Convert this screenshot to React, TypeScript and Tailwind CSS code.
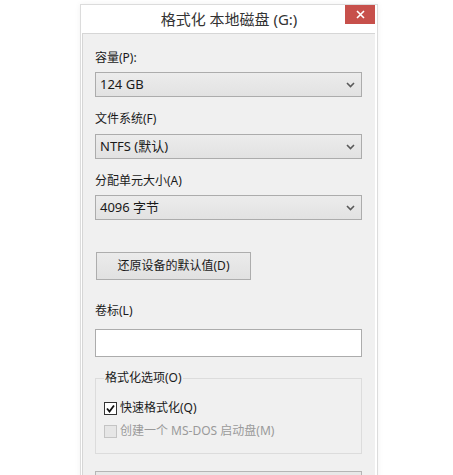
import React from 'react';

const Chevron = () => (
  <svg width="9" height="6" viewBox="0 0 9 6" className="shrink-0">
    <path d="M1 1 L4.5 4.5 L8 1" fill="none" stroke="#5a5a5a" strokeWidth="1.6" />
  </svg>
);

const Select = ({ value, className = '' }: { value: string; className?: string }) => (
  <div
    className={`flex h-[25px] w-[267px] items-center justify-between border border-[#acacac] bg-gradient-to-b from-[#ececec] to-[#e2e2e2] pl-[4px] pr-[6px] text-[13px] text-[#1a1a1a] ${className}`}
  >
    <span>{value}</span>
    <Chevron />
  </div>
);

const Label = ({ text, className = '' }: { text: string; className?: string }) => (
  <div className={`h-[18px] text-[12px] leading-[18px] text-[#1a1a1a] ${className}`}>{text}</div>
);

export default function App() {
  return (
    <div
      className="h-[475px] w-[453px] overflow-hidden bg-white"
      style={{ fontFamily: '"Noto Sans", "Noto Sans CJK SC", sans-serif' }}
    >
      <div className="relative ml-[80px] pt-[4px]">
        <div className="w-[298px] border border-[#dcdcdc] bg-white shadow-[0_0_6px_rgba(0,0,0,0.06)]">
          {/* title bar */}
          <div className="flex h-[28px] items-center justify-center text-[15px] text-[#333]">
            格式化 本地磁盘 (G:)
          </div>
          <div className="absolute left-[265px] top-[5px] flex h-[19px] w-[30px] items-center justify-center bg-[#c7504b]">
            <svg width="9" height="9" viewBox="0 0 9 9">
              <path d="M1 1 L8 8 M8 1 L1 8" stroke="#fff" strokeWidth="1.6" />
            </svg>
          </div>

          {/* client */}
          <div className="ml-[1px] mr-[2px] border-l border-t border-[#d6d6d6] bg-[#f0f0f0] pb-[10px] pl-[12px] pt-[15px]">
            <Label text="容量(P):" />
            <Select value="124 GB" className="mt-[5px]" />

            <Label text="文件系统(F)" className="mt-[13px]" />
            <Select value="NTFS (默认)" className="mt-[6px]" />

            <Label text="分配单元大小(A)" className="mt-[13px]" />
            <Select value="4096 字节" className="mt-[5px]" />

            <div className="ml-[1px] mt-[32px] flex h-[28px] w-[155px] items-center justify-center border border-[#adadad] bg-gradient-to-b from-[#ebebeb] to-[#e1e1e1] text-[12px] text-[#1a1a1a]">
              还原设备的默认值(D)
            </div>

            <Label text="卷标(L)" className="mt-[22px]" />
            <div className="mt-[9px] h-[28px] w-[267px] border border-[#acacac] bg-white" />

            <fieldset className="mt-[12px] w-[267px] border border-[#dcdcdc] pb-[13px] pl-[8px]">
              <legend className="px-[1px] text-[12px] leading-[18px] text-[#1a1a1a]">格式化选项(O)</legend>
              <div className="mt-[12px] flex h-[18px] items-center gap-[3px] text-[12px] text-[#1a1a1a]">
                <div className="flex h-[13px] w-[13px] items-center justify-center border border-[#333] bg-white">
                  <svg width="9" height="9" viewBox="0 0 9 9">
                    <path d="M1 4.5 L3.5 7.5 L8 1.5" fill="none" stroke="#111" strokeWidth="1.8" />
                  </svg>
                </div>
                <span>快速格式化(Q)</span>
              </div>
              <div className="mt-[5px] flex h-[18px] items-center gap-[3px] text-[12px] text-[#9a9a9a]">
                <div className="h-[13px] w-[13px] border border-[#c4c4c4] bg-[#e6e6e6]" />
                <span>创建一个 MS-DOS 启动盘(M)</span>
              </div>
            </fieldset>

            <div className="mt-[17px] h-[30px] w-[267px] border border-[#b5b5b5] bg-[#e8e8e8]" />
          </div>
        </div>
      </div>
    </div>
  );
}
